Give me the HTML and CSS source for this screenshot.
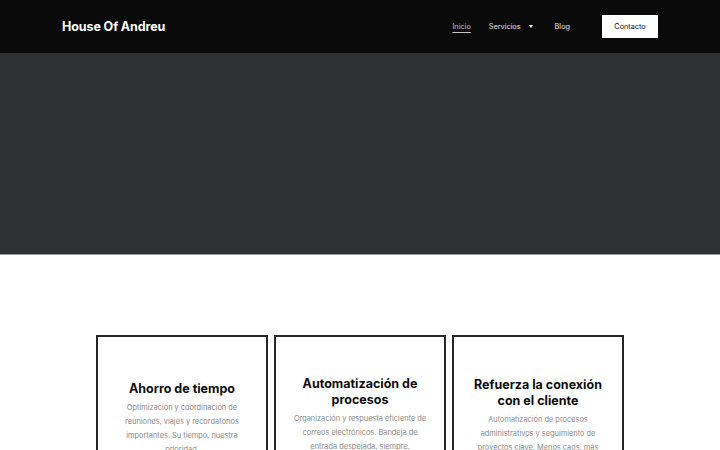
FILE: index.html
```html
<!DOCTYPE html>
<html lang="es">
<head>
<meta charset="utf-8">
<title>House Of Andreu</title>
<link rel="stylesheet" href="styles.css">
</head>
<body>
<header class="header">
  <div class="logo">House Of Andreu</div>
  <nav class="nav">
    <a class="nav-link active" href="#">Inicio</a>
    <a class="nav-link dropdown" href="#">Servicios <span class="caret"></span></a>
    <a class="nav-link" href="#">Blog</a>
    <a class="btn" href="#">Contacto</a>
  </nav>
</header>
<section class="hero"></section>
<section class="features">
  <div class="card card-one">
    <h3 class="card-title">Ahorro de tiempo</h3>
    <p class="card-text">Optimización y coordinación de reuniones, viajes y recordatorios importantes. Su tiempo, nuestra prioridad.</p>
  </div>
  <div class="card card-two">
    <h3 class="card-title">Automatización de procesos</h3>
    <p class="card-text">Organización y respuesta eficiente de correos electrónicos. Bandeja de entrada despejada, siempre.</p>
  </div>
  <div class="card card-three">
    <h3 class="card-title">Refuerza la conexión con el cliente</h3>
    <p class="card-text">Automatización de procesos administrativos y seguimiento de proyectos clave. Menos caos, más enfoque.</p>
  </div>
</section>
</body>
</html>
```
FILE: styles.css
```css
* { box-sizing: border-box; }
html, body { margin: 0; padding: 0; }
body {
  font-family: Inter, "Liberation Sans", sans-serif;
  background: #fff;
  color: #111;
  overflow: hidden;
}
a { text-decoration: none; color: inherit; }

.header {
  height: 53px;
  background: #0a0a0a;
  display: flex;
  align-items: center;
  justify-content: space-between;
  padding: 0 62px;
}
.logo {
  color: #fff;
  font-weight: 700;
  font-size: 12.5px;
  letter-spacing: -0.1px;
}
.nav {
  display: flex;
  align-items: center;
  font-size: 7.3px;
  color: #e6e6e6;
}
.nav-link { margin-right: 20px; }
.nav-link.active {
  margin-right: 18px;
  text-decoration: underline;
  text-underline-offset: 3px;
  color: #c4c4c4;
}
.dropdown { display: flex; align-items: center; margin-right: 22px; }
.caret {
  display: inline-block;
  width: 0; height: 0;
  border-left: 2px solid transparent;
  border-right: 2px solid transparent;
  border-top: 3.5px solid #e6e6e6;
  margin-left: 8px;
}
.btn {
  background: #fff;
  color: #111;
  width: 56px;
  height: 23px;
  display: flex;
  align-items: center;
  justify-content: center;
  margin-left: 12px;
}

.hero {
  height: 202px;
  background: #2f3032;
  border-bottom: 1px solid #9a9a9a;
}

.features {
  display: grid;
  grid-template-columns: repeat(3, 172px);
  column-gap: 6px;
  justify-content: center;
  padding-top: 80px;
}
.card {
  border: 2px solid #262626;
  height: 200px;
  padding: 44px 14px 0;
  text-align: center;
}
.card-two { padding-top: 39px; }
.card-three { padding-top: 40px; }
.card-title {
  margin: 0;
  font-size: 12.5px;
  line-height: 16px;
  font-weight: 700;
  color: #0d0d0d;
}
.card-text {
  margin: 4px 0 0;
  font-size: 7.4px;
  line-height: 14px;
  color: #8a8a8a;
}
```
